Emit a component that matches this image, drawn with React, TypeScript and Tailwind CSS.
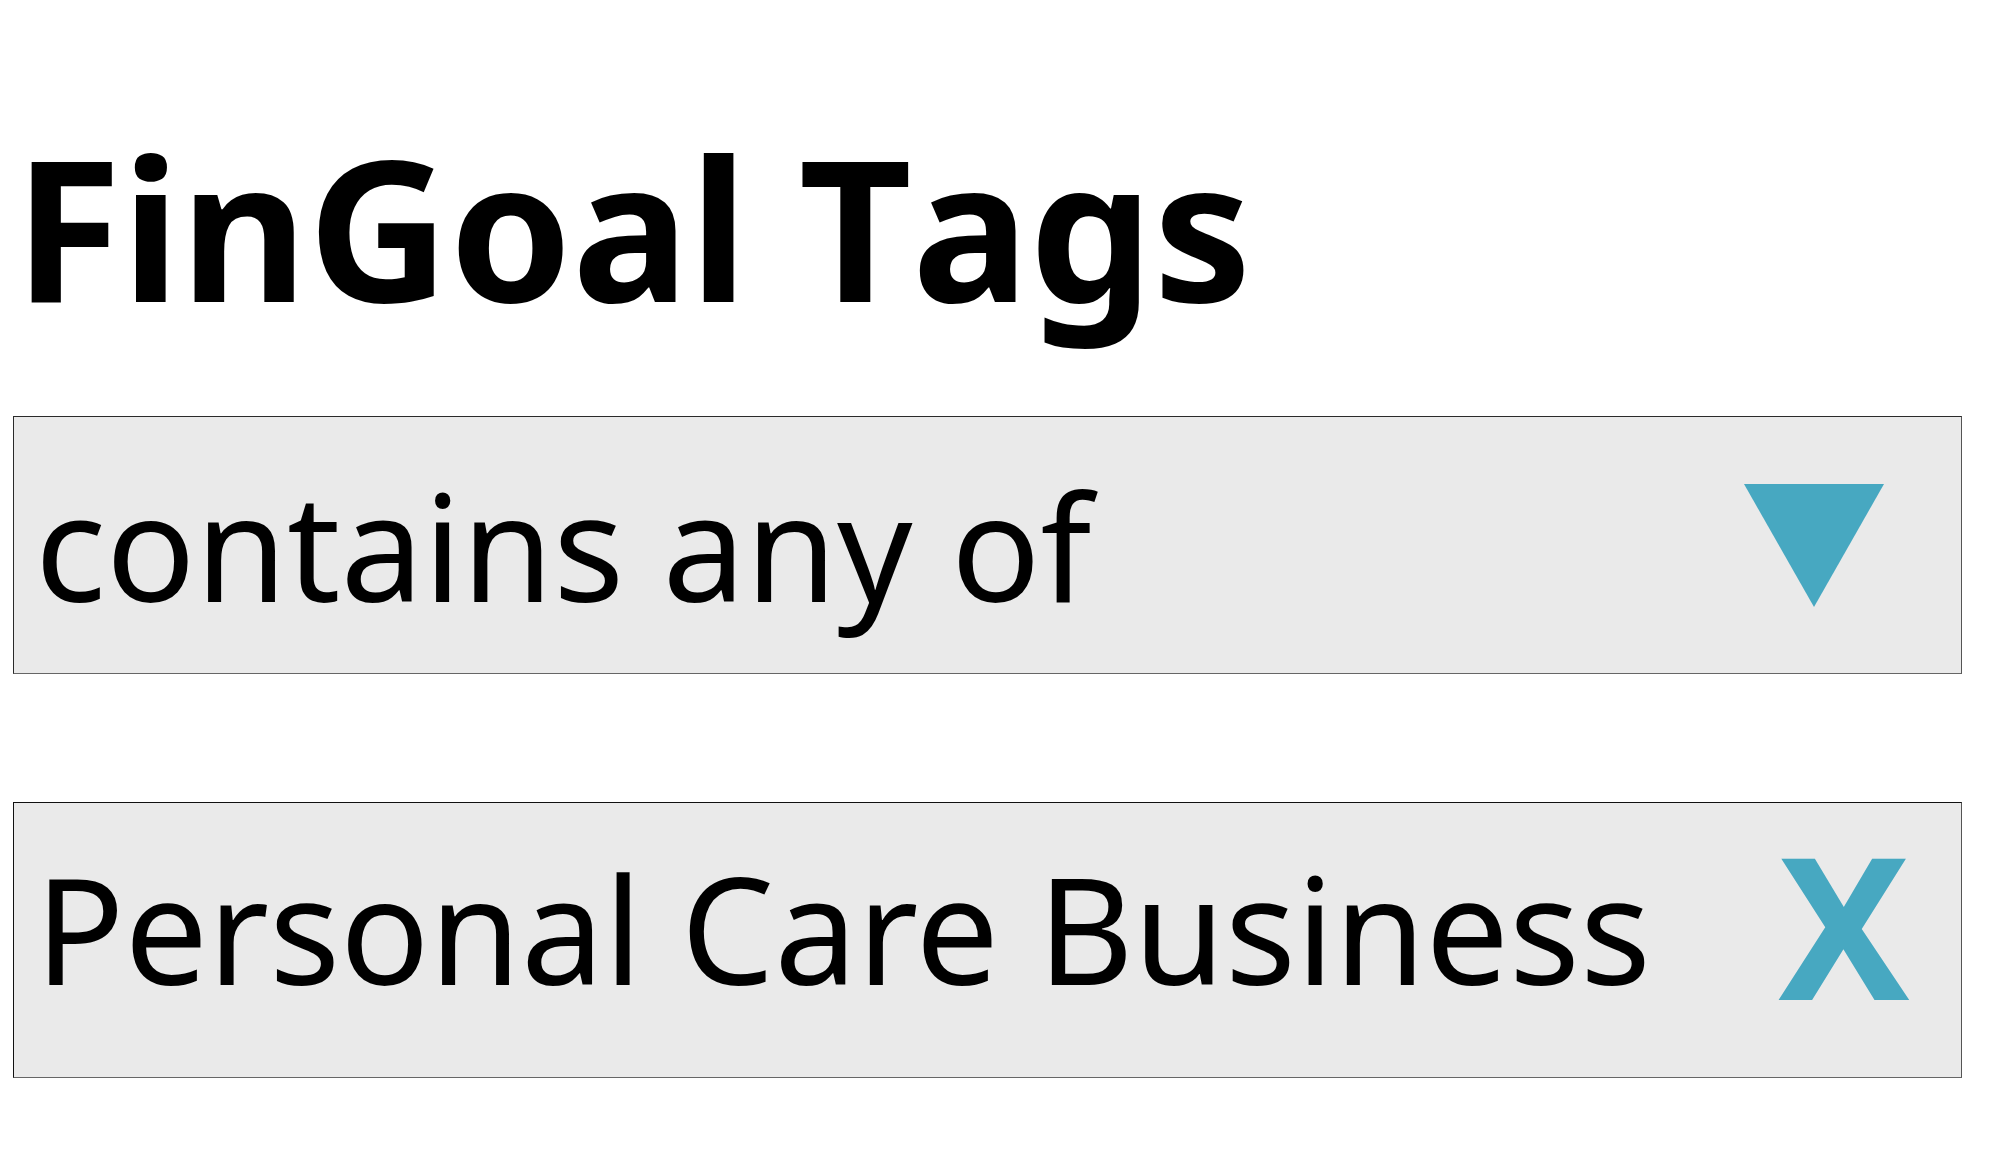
import React from "react";

export default function App() {
  return (
    <div className="w-[2000px] h-[1167px] bg-white overflow-hidden" style={{ fontFamily: '"Noto Sans", "Open Sans", sans-serif' }}>
      <div className="pt-[128px] pl-[13px]">
        <h1 className="text-[196px] leading-none font-bold text-black pl-[1px] whitespace-nowrap [font-kerning:none]">FinGoal Tags</h1>
        <div className="mt-[92px] w-[1949px] h-[258px] bg-[#eaeaea] border border-[#2a2a2a] border-r-[#555] border-b-[#666] flex items-center justify-between">
          <span className="pl-[21px] text-[148px] leading-none text-black whitespace-nowrap">contains any of</span>
          <svg width="140" height="123" viewBox="0 0 140 123" className="mr-[77px]">
            <polygon points="0,0 140,0 70,123" fill="#47a8c1" />
          </svg>
        </div>
        <div className="mt-[128px] w-[1949px] h-[276px] bg-[#eaeaea] border border-[#111] border-r-[#555] border-b-[#666] flex items-center justify-between pb-[24px]">
          <span className="pl-[21px] text-[148px] leading-none text-black whitespace-nowrap">Personal Care Business</span>
          <span className="pr-[51px] mb-[10px] text-[197px] leading-none font-bold text-[#47a8c1]">X</span>
        </div>
      </div>
    </div>
  );
}
